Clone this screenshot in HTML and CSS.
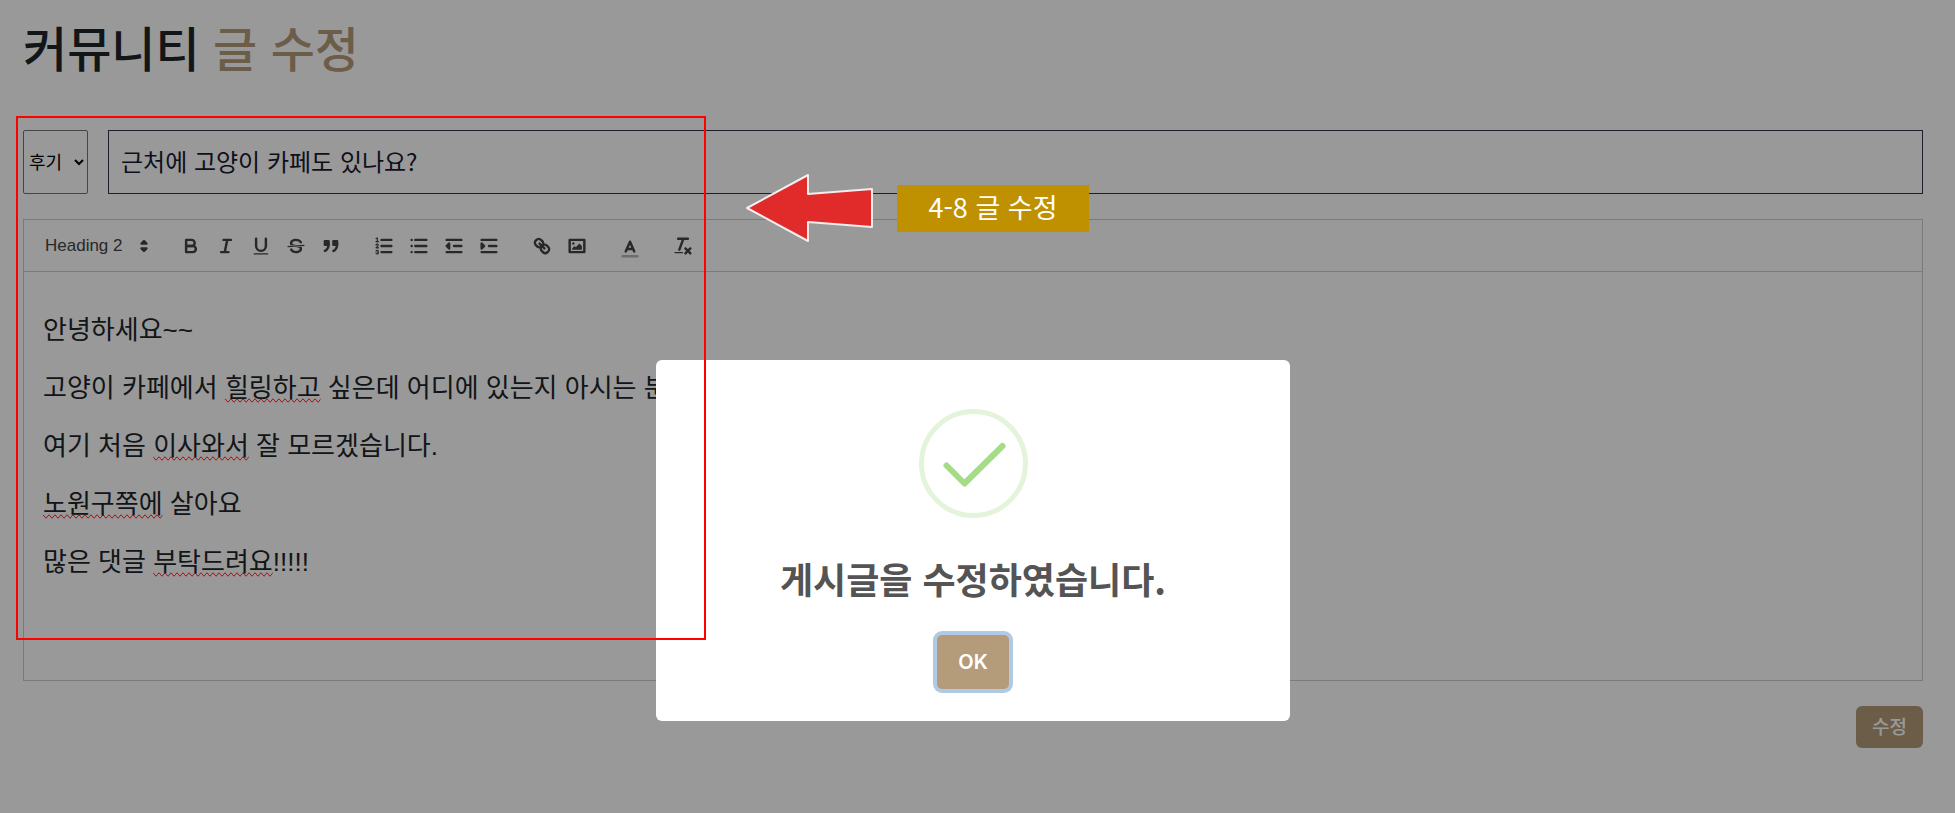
FILE: index.html
```html
<!DOCTYPE html>
<html lang="ko">
<head>
<meta charset="utf-8">
<title>커뮤니티 글 수정</title>
<link rel="stylesheet" href="styles.css">
</head>
<body>
<main class="page">
  <h1 class="page-title">커뮤니티 <span class="accent">글 수정</span></h1>
  <form class="post-form">
    <div class="subject-row">
      <select class="category" aria-label="분류"><option>후기</option></select>
      <input class="subject" type="text" aria-label="제목" value="근처에 고양이 카페도 있나요?">
    </div>
    <div class="editor">
      <div class="toolbar">
        <div class="heading-picker">
          <select class="heading-select" aria-label="Heading"><option>Heading 2</option></select>
          <svg class="icon" viewBox="0 0 18 18"><polygon class="solid" points="7 11 9 13 11 11"/><polygon class="solid" points="7 7 9 5 11 7"/></svg>
        </div>
        <div class="tool-group">
          <button type="button" class="tool" aria-label="Bold"><svg class="icon" viewBox="0 0 18 18"><path d="M5,4H9.5A2.5,2.5,0,0,1,9.5,9H5Z"/><path d="M5,9h5.5A2.5,2.5,0,0,1,10.5,14H5Z"/></svg></button>
          <button type="button" class="tool" aria-label="Italic"><svg class="icon" viewBox="0 0 18 18"><path d="M7,4H13M5,14H11M8,14L10,4"/></svg></button>
          <button type="button" class="tool" aria-label="Underline"><svg class="icon" viewBox="0 0 18 18"><path d="M5,3V9a4,4,0,0,0,8,0V3"/><rect class="fill" x="3" y="15" width="12" height="1" rx="0.5"/></svg></button>
          <button type="button" class="tool" aria-label="Strike"><svg class="icon" viewBox="0 0 18 18"><path class="thin" d="M15.5,8.5L2.5,9.5"/><path class="fill" d="M9.007,8C6.542,7.791,6,7.519,6,6.5,6,5.792,7.283,5,9,5c1.571,0,2.765.679,2.969,1.309a1,1,0,0,0,1.9-.617C13.356,4.106,11.354,3,9,3,6.2,3,4,4.538,4,6.5a3.2,3.2,0,0,0,.5,1.843Z"/><path class="fill" d="M8.984,10C11.457,10.208,12,10.479,12,11.5c0,0.708-1.283,1.5-3,1.5-1.571,0-2.765-.679-2.969-1.309a1,1,0,1,0-1.9.617C4.644,13.894,6.646,15,9,15c2.8,0,5-1.538,5-3.5a3.2,3.2,0,0,0-.5-1.843Z"/></svg></button>
          <button type="button" class="tool" aria-label="Quote"><svg class="icon" viewBox="0 0 18 18"><rect class="solid" x="4" y="5" width="3" height="3"/><rect class="solid" x="11" y="5" width="3" height="3"/><path class="solid" d="M7,8c0,4.031-3,5-3,5"/><path class="solid" d="M14,8c0,4.031-3,5-3,5"/></svg></button>
        </div>
        <div class="tool-group">
          <button type="button" class="tool" aria-label="Ordered list"><svg class="icon" viewBox="0 0 18 18"><path d="M7,4H15M7,9H15M7,14H15"/><path class="thin" d="M2.5,5.5H4.5"/><path class="fill" d="M3.5,6A0.5,0.5,0,0,1,3,5.5V3.085l-0.276.138A0.5,0.5,0,0,1,2.053,3c-0.124-.247-0.023-0.324.224-0.447l1-.5A0.5,0.5,0,0,1,4,2.5v3A0.5,0.5,0,0,1,3.5,6Z"/><path class="thin" d="M4.5,10.5h-2c0-.234,1.85-1.076,1.85-2.234A0.959,0.959,0,0,0,2.5,8.156"/><path class="thin" d="M2.5,14.846a0.959,0.959,0,0,0,1.85-.109A0.7,0.7,0,0,0,3.75,14a0.688,0.688,0,0,0,.6-0.736,0.959,0.959,0,0,0-1.85-.109"/></svg></button>
          <button type="button" class="tool" aria-label="Bullet list"><svg class="icon" viewBox="0 0 18 18"><path d="M6,4H15M6,9H15M6,14H15M3,4H3M3,9H3M3,14H3"/></svg></button>
          <button type="button" class="tool" aria-label="Outdent"><svg class="icon" viewBox="0 0 18 18"><path d="M3,14H15M3,4H15M9,9H15"/><polygon class="solid" points="5 7 5 11 3 9"/></svg></button>
          <button type="button" class="tool" aria-label="Indent"><svg class="icon" viewBox="0 0 18 18"><path d="M3,14H15M3,4H15M9,9H15"/><polygon class="solid" points="3 7 3 11 5 9"/></svg></button>
        </div>
        <div class="tool-group">
          <button type="button" class="tool" aria-label="Link"><svg class="icon" viewBox="0 0 18 18"><path d="M7,7L11,11"/><path d="M8.9,4.577a3.476,3.476,0,0,1,.36,4.679A3.476,3.476,0,0,1,4.577,8.9C3.185,7.5,2.035,6.4,4.217,4.217S7.5,3.185,8.9,4.577Z"/><path d="M13.423,9.1a3.476,3.476,0,0,0-4.679-.36,3.476,3.476,0,0,0,.36,4.679c1.392,1.392,2.5,2.542,4.679.36S14.815,10.5,13.423,9.1Z"/></svg></button>
          <button type="button" class="tool" aria-label="Image"><svg class="icon" viewBox="0 0 18 18"><rect x="3" y="4" width="12" height="10"/><circle class="fill" cx="6" cy="7" r="1"/><polygon class="fill" points="5 12 5 11 7 9 8 10 11 7 13 9 13 12"/></svg></button>
        </div>
        <div class="tool-group">
          <button type="button" class="tool tool-color" aria-label="Color"><svg class="icon" viewBox="0 0 18 18"><path class="swatch" d="M3,15H15"/><path d="M5.5,11L9,3L12.5,11M11.63,9H6.38"/></svg></button>
        </div>
        <div class="tool-group">
          <button type="button" class="tool" aria-label="Clear formatting"><svg class="icon" viewBox="0 0 18 18"><path d="M5,3H13M6,12L9.35,3M11,11L15,15M15,11L11,15"/><rect class="fill" x="2" y="14" width="7" height="1" rx="0.5"/></svg></button>
        </div>
      </div>
      <div class="content" contenteditable="true" spellcheck="false">
        <h2>안녕하세요~~</h2>
        <h2>고양이 카페에서 <span class="misspelled">힐링하고</span> 싶은데 어디에 있는지 아시는 분</h2>
        <h2>여기 처음 <span class="misspelled">이사와서</span> 잘 모르겠습니다.</h2>
        <h2><span class="misspelled">노원구쪽에</span> 살아요</h2>
        <h2>많은 댓글 <span class="misspelled">부탁드려요</span>!!!!!</h2>
      </div>
    </div>
    <button type="button" class="submit">수정</button>
  </form>
</main>

<div class="backdrop">
  <div class="modal" role="dialog" aria-labelledby="modal-title">
    <svg class="success" viewBox="0 0 109 109"><circle cx="54.5" cy="54.5" r="52"/><path d="M27.500 56.500L45.500 74.500L83.500 37"/></svg>
    <h2 class="modal-title" id="modal-title">게시글을 수정하였습니다.</h2>
    <button type="button" class="confirm">OK</button>
  </div>
</div>

<div class="mark-frame"></div>
<div class="mark-callout">
  <svg class="mark-arrow" viewBox="0 0 128 72"><polygon points="2,36 63,3 63,22 127,17 127,55 63,50 63,69"/></svg>
  <span class="mark-label">4-8 글 수정</span>
</div>
</body>
</html>
```

FILE: styles.css
```css
* { box-sizing: border-box; }

body {
  margin: 0;
  min-height: 100vh;
  background: #fff;
  color: #212529;
  font-family: "Noto Sans CJK KR", sans-serif;
}

h1, h2 { margin: 0; }

.page { padding: 14px 32px 0 23px; }

.page-title {
  font-size: 48px;
  font-weight: 500;
  line-height: 64px;
}

.accent { color: #b49c7b; }

.post-form {
  display: flex;
  flex-direction: column;
  gap: 25px;
  padding-top: 52px;
}

.subject-row {
  display: flex;
  gap: 20px;
  height: 64px;
}

.category {
  width: 65px;
  padding: 0 0 2px 1px;
  border: 1px solid #767676;
  border-radius: 2px;
  background-color: #fff;
  color: #000;
  font: 400 18px "Noto Sans CJK KR", sans-serif;
}

.subject {
  flex: 1;
  min-width: 0;
  padding: 0 12px 4px;
  border: 1px solid #33344a;
  background: #fff;
  color: #1a1a2e;
  font: 400 24px "Noto Sans CJK KR", sans-serif;
}

.editor { border: 1px solid #ccc; }

.toolbar {
  display: flex;
  align-items: center;
  gap: 18px;
  height: 52px;
  padding: 0 21px;
  border-bottom: 1px solid #ccc;
}

.heading-picker {
  display: flex;
  align-items: center;
  color: #444;
}

.heading-select {
  appearance: none;
  width: 88px;
  padding: 0;
  border: 0;
  background: none;
  color: #444;
  font: 500 17px "Liberation Sans", Arial, sans-serif;
}

.tool-group { display: flex; }

.tool {
  display: flex;
  align-items: center;
  justify-content: center;
  width: 35px;
  height: 30px;
  padding: 0;
  border: 0;
  background: none;
}

.tool-color { padding-top: 6px; }

.icon {
  width: 22px;
  height: 22px;
  fill: none;
  stroke: #444;
  stroke-width: 2;
  stroke-linecap: round;
  stroke-linejoin: round;
}

.icon .solid { fill: #444; }
.icon .fill { fill: #444; stroke: none; }
.icon .thin { stroke-width: 1; }
.icon .swatch { opacity: 0.4; }

.content {
  display: flex;
  flex-direction: column;
  gap: 20px;
  min-height: 408px;
  padding: 39px 19px;
  outline: 0;
}

.content h2 {
  color: #212529;
  font: 400 26px/38px "Liberation Sans", "Noto Sans CJK KR", sans-serif;
}

.misspelled { text-decoration: spelling-error; }

.submit {
  align-self: flex-end;
  width: 67px;
  height: 42px;
  padding: 0 0 4px;
  border: 0;
  border-radius: 6px;
  background: #b49c7b;
  color: #fff;
  font: 500 19px "Noto Sans CJK KR", sans-serif;
}

.backdrop {
  position: absolute;
  inset: 0;
  display: flex;
  align-items: flex-start;
  justify-content: center;
  padding: 360px 9px 0 0;
  background: rgba(0, 0, 0, 0.4);
}

.modal {
  display: flex;
  flex-direction: column;
  align-items: center;
  width: 634px;
  padding: 49px 24px 32px;
  border-radius: 6px;
  background: #fff;
}

.success {
  width: 109px;
  height: 109px;
  fill: none;
  stroke-width: 5;
}

.success circle { stroke: #e4f4db; }

.success path {
  stroke: #a5dc86;
  stroke-width: 6;
  stroke-linecap: round;
  stroke-linejoin: round;
}

.modal-title {
  margin: 34px 0 31px;
  color: #545454;
  font-size: 36px;
  font-weight: 700;
  line-height: 52px;
}

.confirm {
  width: 72px;
  height: 54px;
  padding: 0;
  border: 0;
  border-radius: 5px;
  background: #b49c7b;
  box-shadow: 0 0 0 4px #b0cae5;
  color: #fff;
  font: 600 20px Inter, sans-serif;
}

.mark-frame {
  position: absolute;
  top: 116px;
  left: 16px;
  width: 690px;
  height: 524px;
  border: 2px solid #f00;
  pointer-events: none;
}

.mark-callout {
  position: absolute;
  top: 172px;
  left: 745px;
  display: flex;
  align-items: center;
  gap: 24px;
}

.mark-arrow {
  width: 128px;
  height: 72px;
  fill: #e12a2a;
  stroke: #f2eeee;
  stroke-width: 2;
  stroke-linejoin: round;
}

.mark-label {
  width: 192px;
  padding-bottom: 3px;
  background: #bf9000;
  color: #fff;
  font: 400 27px/44px "Noto Sans CJK KR", sans-serif;
  text-align: center;
}
```
